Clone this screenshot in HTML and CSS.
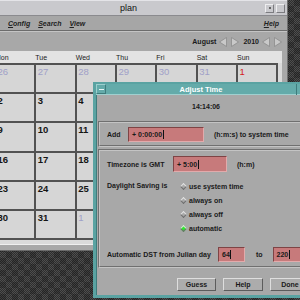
FILE: index.html
```html
<!DOCTYPE html>
<html lang="en">
<head>
  <meta charset="UTF-8" />
  <title>plan</title>
  <link rel="stylesheet" href="styles.css">
</head>
<body>
  <div class="desktop">

    <div class="window main">
      <div class="titlebar">
        <span class="title">plan</span>
        <span class="wbtn dot"><i></i></span>
        <span class="wbtn sq"></span>
      </div>
      <div class="menubar">
        <span><u>C</u>onfig</span>
        <span><u>S</u>earch</span>
        <span><u>V</u>iew</span>
        <span class="help"><u>H</u>elp</span>
      </div>
      <div class="toolbar">
        <span class="month">August</span>
        <svg class="arrow" width="8" height="10" viewBox="0 0 8 10"><polygon points="7.5,0.5 0.5,5 7.5,9.5" fill="#c9c9c9" stroke="#8c8c8c" stroke-width="0.8"/></svg>
        <svg class="arrow" width="8" height="10" viewBox="0 0 8 10"><polygon points="0.5,0.5 7.5,5 0.5,9.5" fill="#c9c9c9" stroke="#8c8c8c" stroke-width="0.8"/></svg>
        <span class="year">2010</span>
        <svg class="arrow" width="8" height="10" viewBox="0 0 8 10"><polygon points="7.5,0.5 0.5,5 7.5,9.5" fill="#c9c9c9" stroke="#8c8c8c" stroke-width="0.8"/></svg>
        <svg class="arrow" width="8" height="10" viewBox="0 0 8 10"><polygon points="0.5,0.5 7.5,5 0.5,9.5" fill="#c9c9c9" stroke="#8c8c8c" stroke-width="0.8"/></svg>
      </div>
      <div class="calendar">
        <div class="days">
          <span>Mon</span><span>Tue</span><span>Wed</span><span>Thu</span><span>Fri</span><span>Sat</span><span>Sun</span>
        </div>
        <div class="grid">
          <div class="cell other">26</div><div class="cell other">27</div><div class="cell other">28</div><div class="cell other">29</div><div class="cell other">30</div><div class="cell other">31</div><div class="cell sun">1</div>
          <div class="cell">2</div><div class="cell">3</div><div class="cell">4</div><div class="cell">5</div><div class="cell">6</div><div class="cell">7</div><div class="cell sun">8</div>
          <div class="cell">9</div><div class="cell">10</div><div class="cell">11</div><div class="cell">12</div><div class="cell">13</div><div class="cell">14</div><div class="cell sun">15</div>
          <div class="cell">16</div><div class="cell">17</div><div class="cell">18</div><div class="cell">19</div><div class="cell">20</div><div class="cell">21</div><div class="cell sun">22</div>
          <div class="cell">23</div><div class="cell">24</div><div class="cell">25</div><div class="cell">26</div><div class="cell">27</div><div class="cell">28</div><div class="cell sun">29</div>
          <div class="cell">30</div><div class="cell">31</div><div class="cell other">1</div><div class="cell other">2</div><div class="cell other">3</div><div class="cell other">4</div><div class="cell other">5</div>
        </div>
      </div>
    </div>

    <div class="window dialog">
      <div class="dlg-title">
        <span class="menu-btn"><i></i></span>
        <span class="dlg-name">Adjust Time</span>
        <span class="dlg-btns"></span>
      </div>
      <div class="clock">14:14:06</div>

      <div class="frame add-frame">
        <div class="row">
          <span class="label add-label">Add</span>
          <span class="field add-field">+ 0:00:00<i class="caret"></i></span>
          <span class="unit">(h:m:s) to system time</span>
        </div>
      </div>

      <div class="frame zone-frame">
        <div class="row">
          <span class="label tz-label">Timezone is GMT</span>
          <span class="field tz-field">+ 5:00<i class="caret"></i></span>
          <span class="unit">(h:m)</span>
        </div>
        <div class="dst">
          <span class="label dst-label">Daylight Saving is</span>
          <div class="radios">
            <div class="radio"><span class="diamond"></span>use system time</div>
            <div class="radio"><span class="diamond"></span>always on</div>
            <div class="radio"><span class="diamond"></span>always off</div>
            <div class="radio"><span class="diamond on"></span>automatic</div>
          </div>
        </div>
        <div class="row julian">
          <span class="label jd-label">Automatic DST from Julian day</span>
          <span class="field jd-field">64<i class="caret"></i></span>
          <span class="unit to">to</span>
          <span class="field jd-field jd-end">220<i class="caret"></i></span>
        </div>
      </div>

      <div class="buttons">
        <span class="btn">Guess</span>
        <span class="btn">Help</span>
        <span class="btn">Done</span>
      </div>
    </div>

  </div>
</body>
</html>
```

FILE: styles.css
```css
* {
  box-sizing: border-box;
  font-family: 'Liberation Sans', Arial, sans-serif;
}

body {
  margin: 0;
  overflow: hidden;
}

.desktop {
  position: relative;
  width: 300px;
  height: 300px;
  overflow: hidden;
  background-color: #3c3c3c;
  background-image:
    repeating-conic-gradient(rgba(0, 0, 0, 0.22) 0 25%, transparent 0 50%),
    repeating-conic-gradient(#2e2e2e 0 25%, #4e4e4e 0 50%);
  background-size: 12px 12px, 2px 2px;
}

.window {
  position: absolute;
  background: #a8a8a8;
}

/* main calendar window */
.main {
  left: -6px;
  top: 0;
  width: 294px;
  height: 251px;
  border-right: 1px solid #707070;
  border-bottom: 1px solid #6a6a6a;
}

.titlebar {
  display: flex;
  align-items: center;
  height: 16px;
  padding-right: 2px;
  background: #c9c9cd;
  border-top: 1px solid #e4e4e8;
  border-bottom: 1px solid #8a8a8e;
}

.title {
  flex: 1;
  text-align: center;
  font-size: 9px;
  color: #111;
}

.wbtn {
  width: 9px;
  height: 9px;
  margin-left: 2px;
  background: #c9c9cd;
  border: 1px solid;
  border-color: #eeeef0 #7c7c80 #7c7c80 #eeeef0;
  display: flex;
  align-items: center;
  justify-content: center;
}

.wbtn.dot i {
  width: 2px;
  height: 2px;
  background: #666;
}

.menubar {
  display: flex;
  gap: 8px;
  height: 15px;
  align-items: center;
  padding: 0 8px 0 14px;
  background: #a6a6a6;
  border-bottom: 1px solid #6c6c6c;
  font-size: 7px;
  font-weight: bold;
  font-style: italic;
  color: #222;
}

.menubar .help {
  margin-left: auto;
}

.toolbar {
  display: flex;
  justify-content: flex-end;
  align-items: center;
  height: 20px;
  padding-right: 5px;
  border-top: 1px solid #c4c4c4;
  font-size: 7px;
  font-weight: bold;
  color: #1a1a1a;
}

.toolbar .arrow {
  margin-left: 3px;
}

.toolbar .year {
  margin-left: 4px;
}

.toolbar .arrow + .arrow {
  margin-left: 4px;
}

.calendar {
  margin-right: 5px;
  height: 194px;
  background: #dadada;
  border-bottom: 1px solid #efefef;
}

.days {
  display: grid;
  grid-template-columns: repeat(7, 40.33px);
  height: 12px;
  padding-top: 3px;
  background: #e3e3e3;
  font-size: 7px;
  line-height: 8px;
  color: #222;
}

.days span {
  padding-left: 1px;
}

.grid {
  display: grid;
  grid-template-columns: repeat(7, 40.33px);
  grid-auto-rows: 29.2px;
  border-top: 2px solid #525252;
  border-left: 2px solid #525252;
  width: 284.3px;
}

.cell {
  border-right: 2px solid #525252;
  border-bottom: 2px solid #525252;
  background: #d6d6d6;
  padding: 1px 0 0 1.5px;
  font-size: 9.5px;
  line-height: 11px;
  font-weight: bold;
  color: #151515;
}

.cell.other {
  color: #a0a0c8;
  font-weight: normal;
}

.cell.sun {
  color: #d41c1c;
  font-weight: normal;
}

/* adjust time dialog */
.dialog {
  left: 93px;
  top: 82px;
  width: 220px;
  height: 216px;
  border: 3px solid #5aa3a2;
  border-top-width: 2px;
  box-shadow: inset 1px 1px 0 #3f7c7c;
  font-size: 7px;
  font-weight: bold;
  color: #1a1a1a;
}

.dlg-title {
  display: flex;
  align-items: center;
  height: 11px;
  background: #64abaa;
  border-bottom: 1px solid #9fd0cf;
}

.menu-btn {
  width: 10px;
  height: 10px;
  border: 1px solid;
  border-color: #9ccfce #3f7c7c #3f7c7c #9ccfce;
  display: flex;
  align-items: center;
  justify-content: center;
}

.menu-btn i {
  width: 5px;
  height: 1px;
  background: #e8f4f4;
}

.dlg-name {
  flex: 1;
  text-align: center;
  color: #fff;
  font-size: 7.5px;
}

.dlg-btns {
  width: 14px;
  height: 11px;
  border-left: 1px solid #3f7c7c;
}

.clock {
  height: 26px;
  line-height: 24px;
  text-align: center;
  padding-left: 6px;
}

.frame {
  margin: 0 2px;
  border: 2px groove #c4c4c4;
  padding-left: 7px;
}

.add-frame {
  height: 26px;
  display: flex;
  align-items: center;
}

.zone-frame {
  margin-top: 2px;
  height: 119px;
  padding-top: 5px;
}

.row {
  display: flex;
  align-items: center;
}

.label {
  flex: none;
}

.add-label { width: 21px; }
.tz-label { width: 66px; }
.dst-label { width: 73px; line-height: 14px; }
.jd-label { width: 111px; }

.field {
  position: relative;
  display: flex;
  align-items: center;
  height: 15px;
  padding-left: 3px;
  background: #c77a7b;
  border: 1px solid;
  border-color: #7e4445 #e2aaab #e2aaab #7e4445;
  color: #1a1a1a;
}

.add-field { width: 76px; }
.tz-field { width: 54px; height: 16px; }
.jd-field { width: 32px; }

.caret {
  width: 1px;
  height: 9px;
  background: #111;
  margin-left: 0.5px;
}

.unit {
  margin-left: 10px;
}

.unit.to {
  margin-left: 11px;
}

.jd-end {
  margin-left: 10px;
  width: 40px;
}

.dst {
  display: flex;
  margin-top: 7px;
}

.radio {
  display: flex;
  align-items: center;
  height: 14px;
}

.diamond {
  width: 5px;
  height: 5px;
  margin: 0 3px 0 1px;
  transform: rotate(45deg);
  background: #a8a8a8;
  border: 1px solid;
  border-color: #e2e2e2 #6e6e6e #6e6e6e #e2e2e2;
}

.diamond.on {
  background: #2ee82e;
}

.julian {
  margin-top: 12px;
}

.buttons {
  display: flex;
  gap: 7px;
  padding: 10px 0 0 81px;
}

.btn {
  width: 41px;
  height: 13px;
  line-height: 11px;
  text-align: center;
  background: #acacac;
  border: 1px solid;
  border-color: #dedede #5c5c5c #5c5c5c #dedede;
}

.btn:first-child {
  width: 40px;
}
```
